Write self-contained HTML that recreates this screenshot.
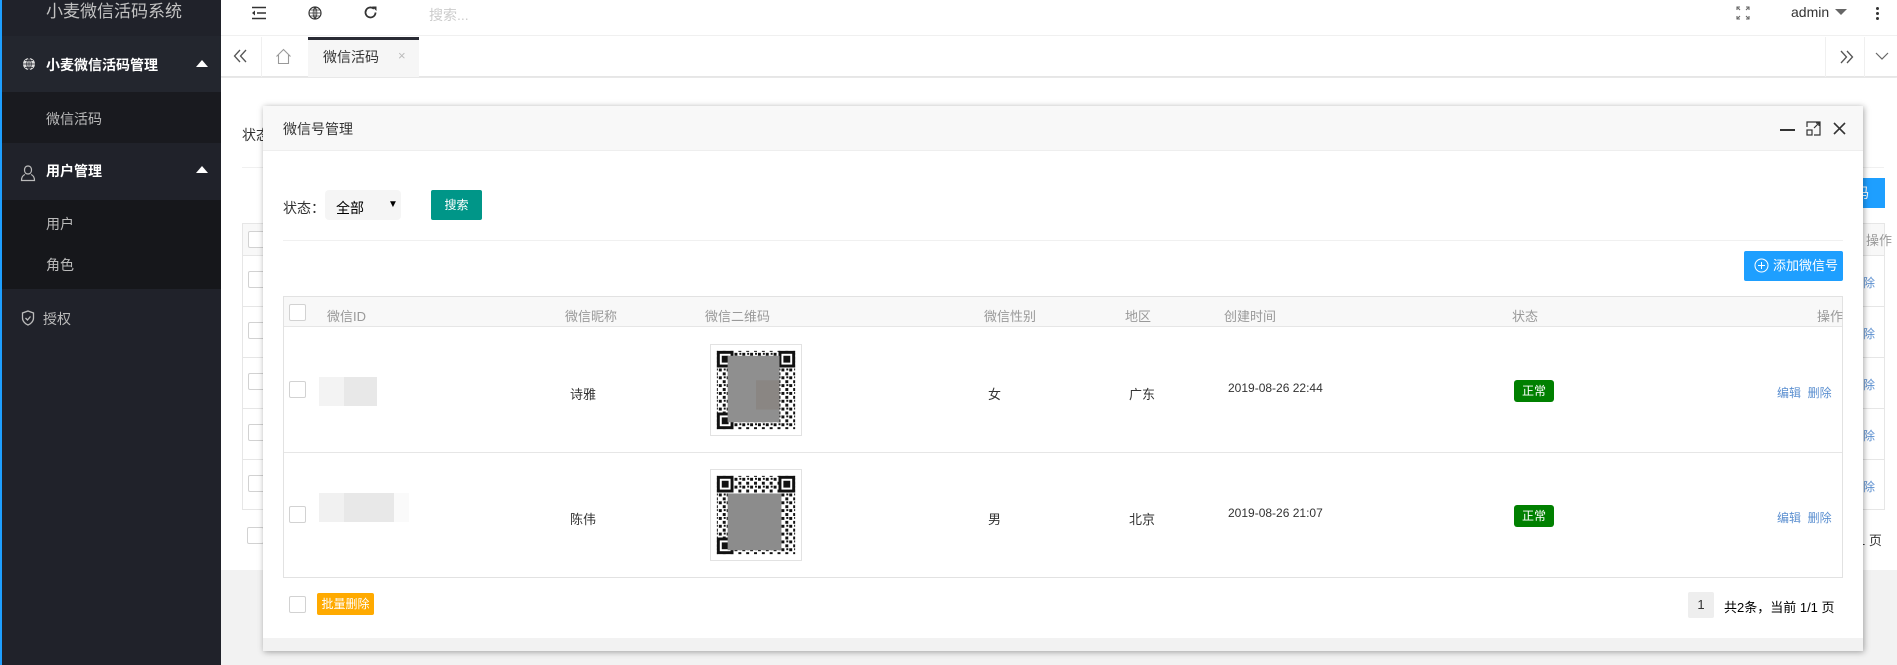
<!DOCTYPE html>
<html><head><meta charset="utf-8">
<style>
*{margin:0;padding:0;box-sizing:border-box}
body{width:1897px;height:665px;overflow:hidden;position:relative;background:#f2f2f2;font-family:"Liberation Sans","Noto Sans CJK SC",sans-serif;font-size:14px;color:#333}
.a{position:absolute}
.side{left:0;top:0;width:221px;height:665px;background:#20222a;border-left:2px solid #1e9fff}
.cb{position:absolute;width:17px;height:17px;border:1px solid #d2d2d2;background:#fff;border-radius:2px}
.th{position:absolute;top:306px;font-size:13px;color:#999}
.td{position:absolute;font-size:13px;color:#333}
.qr{position:absolute;width:92px;height:92px;border:1px solid #e2e2e2;background:#fff}
.tag{position:absolute;width:40px;height:22px;background:#008000;color:#fff;font-size:12px;border-radius:3px;text-align:center;line-height:22px}
.op{position:absolute;font-size:12px;color:#5b8fd0}
</style></head><body>
<div class="a side">
  <div class="a" style="left:0;top:0;width:219px;height:36px;color:#c2c2c2;font-size:17px;padding-left:44px;line-height:24px">小麦微信活码系统</div>
  <div class="a" style="left:0;top:36px;width:219px;height:56px;background:#23262e"></div>
  <svg class="a" style="left:20px;top:57px" width="14" height="14" viewBox="0 0 14 14"><circle cx="7" cy="7" r="6" fill="#ddd"/><path d="M1 7h12M7 1v12M3 3.5h8M3 10.5h8M7 1c-3 3-3 9 0 12M7 1c3 3 3 9 0 12" stroke="#20222a" stroke-width="0.8" fill="none"/></svg>
  <div class="a" style="left:44px;top:55px;color:#fff;font-size:14px;font-weight:bold">小麦微信活码管理</div>
  <div class="a" style="left:194px;top:60px;width:0;height:0;border-left:6px solid transparent;border-right:6px solid transparent;border-bottom:7px solid #fff"></div>
  <div class="a" style="left:0;top:92px;width:219px;height:51px;background:#191a1f"></div>
  <div class="a" style="left:44px;top:109px;color:#bbb;font-size:14px">微信活码</div>
  <svg class="a" style="left:18px;top:165px" width="16" height="17" viewBox="0 0 16 17"><path d="M8 1c2.5 0 3.5 2 3.5 4s-1 4-3.5 4-3.5-2-3.5-4 1-4 3.5-4zM5 9.5c-2.5 1-3.5 3-3.5 6h13c0-3-1-5-3.5-6" stroke="#bbb" stroke-width="1.2" fill="none"/></svg>
  <div class="a" style="left:44px;top:161px;color:#fff;font-size:14px;font-weight:bold">用户管理</div>
  <div class="a" style="left:194px;top:166px;width:0;height:0;border-left:6px solid transparent;border-right:6px solid transparent;border-bottom:7px solid #fff"></div>
  <div class="a" style="left:0;top:200px;width:219px;height:89px;background:#16171b"></div>
  <div class="a" style="left:44px;top:214px;color:#bbb">用户</div>
  <div class="a" style="left:44px;top:255px;color:#bbb">角色</div>
  <svg class="a" style="left:19px;top:310px" width="14" height="16" viewBox="0 0 14 16"><path d="M7 1l5.5 2v5c0 3.5-3 6-5.5 7-2.5-1-5.5-3.5-5.5-7V3z" stroke="#bbb" stroke-width="1.3" fill="none"/><path d="M4.5 8l2 2 3-3.5" stroke="#bbb" stroke-width="1.3" fill="none"/></svg>
  <div class="a" style="left:41px;top:309px;color:#bbb">授权</div>
</div>
<div class="a" style="left:221px;top:0;width:1676px;height:36px;background:#fff;border-bottom:1px solid #f0f0f0"></div>
<svg class="a" style="left:251px;top:6px" width="16" height="14" viewBox="0 0 16 14"><path d="M1 1.5h14M6 7h9M1 12.5h14" stroke="#333" stroke-width="1.6"/><path d="M4 4.5L1 7l3 2.5z" fill="#333"/></svg>
<svg class="a" style="left:308px;top:6px" width="14" height="14" viewBox="0 0 14 14"><circle cx="7" cy="7" r="6" fill="none" stroke="#333" stroke-width="1.2"/><path d="M1 7h12M7 1v12M2.5 4h9M2.5 10h9M7 1c-2.5 3-2.5 9 0 12M7 1c2.5 3 2.5 9 0 12" stroke="#333" stroke-width="0.8" fill="none"/></svg>
<svg class="a" style="left:363px;top:5px" width="15" height="15" viewBox="0 0 15 15"><path d="M12.5 7.5a5 5 0 1 1-1.6-3.7" stroke="#333" stroke-width="1.8" fill="none"/><path d="M9 1.5h4.5v4.5z" fill="#333"/></svg>
<div class="a" style="left:429px;top:5px;color:#ccc;font-size:14px">搜索...</div>
<svg class="a" style="left:1736px;top:6px" width="14" height="14" viewBox="0 0 14 14" stroke="#666" stroke-width="1.1" fill="none"><path d="M1 4V1h3M1 1l3 3M13 4V1h-3M13 1l-3 3M1 10v3h3M1 13l3-3M13 10v3h-3M13 13l-3-3"/></svg>
<div class="a" style="left:1791px;top:4px;color:#333;font-size:14px">admin</div>
<div class="a" style="left:1835px;top:9px;width:0;height:0;border-left:6px solid transparent;border-right:6px solid transparent;border-top:6px solid #666"></div>
<div class="a" style="left:1876px;top:7px;width:3px;height:3px;background:#333;border-radius:2px;box-shadow:0 5px 0 #333,0 10px 0 #333"></div>
<div class="a" style="left:221px;top:36px;width:1676px;height:41px;background:#fff;border-bottom:1px solid #e6e6e6;box-shadow:0 1px 2px rgba(0,0,0,.06)"></div>
<div class="a" style="left:261px;top:37px;width:1px;height:40px;background:#f0f0f0"></div>
<svg class="a" style="left:233px;top:49px" width="16" height="14" viewBox="0 0 16 14"><path d="M7 1L1.5 7 7 13M13 1L7.5 7 13 13" stroke="#555" stroke-width="1.3" fill="none"/></svg>
<svg class="a" style="left:275px;top:48px" width="17" height="17" viewBox="0 0 17 17"><path d="M1.5 8.5L8.5 1.5l7 7M3.5 7v8.5h10V7" stroke="#999" stroke-width="1.1" fill="none"/></svg>
<div class="a" style="left:308px;top:37px;width:111px;height:40px;background:#f6f6f6;border-top:3px solid #292b34"></div>
<div class="a" style="left:323px;top:47px;font-size:14px;color:#333">微信活码</div>
<div class="a" style="left:398px;top:48px;font-size:13px;color:#bbb">×</div>
<div class="a" style="left:1825px;top:37px;width:1px;height:40px;background:#f0f0f0"></div>
<div class="a" style="left:1864px;top:37px;width:1px;height:40px;background:#f0f0f0"></div>
<svg class="a" style="left:1838px;top:50px" width="16" height="14" viewBox="0 0 16 14"><path d="M3 1l5.5 6L3 13M9 1l5.5 6L9 13" stroke="#555" stroke-width="1.3" fill="none"/></svg>
<svg class="a" style="left:1875px;top:52px" width="14" height="9" viewBox="0 0 14 9"><path d="M1 1l6 6 6-6" stroke="#666" stroke-width="1.2" fill="none"/></svg>
<div class="a" style="left:221px;top:78px;width:1676px;height:492px;background:#fff"></div>
<div class="a" style="left:242px;top:125px;font-size:14px;color:#333">状态</div>
<div class="a" style="left:242px;top:167px;width:1642px;height:1px;background:#f0f0f0"></div>
<div class="a" style="left:1855px;top:178px;width:30px;height:30px;background:#1e9fff;color:#fff;font-size:14px;line-height:30px">码</div>
<div class="a" style="left:242px;top:223px;width:1643px;height:287px;border:1px solid #e6e6e6"></div>
<div class="a" style="left:243px;top:224px;width:1641px;height:31px;background:#f8f8f8"></div>
<div class="a" style="left:242px;top:255px;width:1642px;height:1px;background:#e6e6e6"></div>
<div class="a" style="left:242px;top:306px;width:1642px;height:1px;background:#e6e6e6"></div>
<div class="a" style="left:242px;top:357px;width:1642px;height:1px;background:#e6e6e6"></div>
<div class="a" style="left:242px;top:408px;width:1642px;height:1px;background:#e6e6e6"></div>
<div class="a" style="left:242px;top:459px;width:1642px;height:1px;background:#e6e6e6"></div>
<div class="cb" style="left:248px;top:231px"></div>
<div class="cb" style="left:248px;top:271px"></div>
<div class="cb" style="left:248px;top:322px"></div>
<div class="cb" style="left:248px;top:373px"></div>
<div class="cb" style="left:248px;top:424px"></div>
<div class="cb" style="left:248px;top:475px"></div>
<div class="cb" style="left:247px;top:527px"></div>
<div class="a" style="left:1866px;top:230px;font-size:13px;color:#999">操作</div>
<div class="op" style="left:1863px;top:274px">除</div>
<div class="op" style="left:1863px;top:325px">除</div>
<div class="op" style="left:1863px;top:376px">除</div>
<div class="op" style="left:1863px;top:427px">除</div>
<div class="op" style="left:1863px;top:478px">除</div>
<div class="a" style="left:1858px;top:530px;font-size:13px">1 页</div>
<div class="a" style="left:263px;top:106px;width:1600px;height:545px;background:#fff;box-shadow:1px 1px 6px rgba(0,0,0,.35)"></div>
<div class="a" style="left:263px;top:106px;width:1600px;height:45px;background:#f8f8f8;border-bottom:1px solid #eee"></div>
<div class="a" style="left:283px;top:119px;font-size:14px;color:#333">微信号管理</div>
<div class="a" style="left:1780px;top:129px;width:15px;height:2px;background:#333"></div>
<svg class="a" style="left:1806px;top:121px" width="15" height="15" viewBox="0 0 15 15" fill="none" stroke="#333" stroke-width="1.2"><path d="M1 6V1h13v13H8"/><rect x="1" y="9" width="5" height="5"/><path d="M8 7l5-5M10 2h3v3"/></svg>
<svg class="a" style="left:1833px;top:122px" width="13" height="13" viewBox="0 0 13 13"><path d="M1 1l11 11M12 1L1 12" stroke="#333" stroke-width="1.6"/></svg>
<div class="a" style="left:263px;top:638px;width:1600px;height:13px;background:#f2f2f2"></div>
<div class="a" style="left:283px;top:198px;font-size:14px">状态：</div>
<div class="a" style="left:325px;top:190px;width:76px;height:30px;background:#f5f5f5;border-radius:4px"></div>
<div class="a" style="left:336px;top:198px;font-size:14px;color:#000">全部</div>
<div class="a" style="left:388px;top:199px;font-size:10px;color:#000">▼</div>
<div class="a" style="left:431px;top:190px;width:51px;height:30px;background:#009688;border-radius:2px;color:#fff;font-size:12px;text-align:center;line-height:30px">搜索</div>
<div class="a" style="left:283px;top:240px;width:1560px;height:1px;background:#f0f0f0"></div>
<div class="a" style="left:1744px;top:251px;width:99px;height:30px;background:#1e9fff;border-radius:2px;color:#fff;font-size:13px;line-height:30px;padding-left:29px">添加微信号</div>
<svg class="a" style="left:1754px;top:258px" width="15" height="15" viewBox="0 0 15 15"><circle cx="7.5" cy="7.5" r="6.5" fill="none" stroke="#fff" stroke-width="1"/><path d="M7.5 4v7M4 7.5h7" stroke="#fff" stroke-width="1"/></svg>
<div class="a" style="left:283px;top:296px;width:1560px;height:282px;border:1px solid #e2e2e2"></div>
<div class="a" style="left:284px;top:297px;width:1558px;height:30px;background:#f8f8f8;border-bottom:1px solid #e6e6e6"></div>
<div class="a" style="left:284px;top:452px;width:1558px;height:1px;background:#e6e6e6"></div>
<div class="cb" style="left:289px;top:304px"></div>
<div class="th" style="left:327px">微信ID</div>
<div class="th" style="left:565px">微信昵称</div>
<div class="th" style="left:705px">微信二维码</div>
<div class="th" style="left:984px">微信性别</div>
<div class="th" style="left:1125px">地区</div>
<div class="th" style="left:1224px">创建时间</div>
<div class="th" style="left:1512px">状态</div>
<div class="th" style="left:1817px">操作</div>
<div class="cb" style="left:289px;top:381px"></div>
<div class="a" style="left:319px;top:377px;width:25px;height:29px;background:#f3f3f3"></div>
<div class="a" style="left:344px;top:377px;width:33px;height:29px;background:#e8e8e8"></div>
<div class="td" style="left:570px;top:384px">诗雅</div>
<div class="td" style="left:988px;top:384px">女</div>
<div class="td" style="left:1129px;top:384px">广东</div>
<div class="td" style="left:1228px;top:381px;font-size:12px">2019-08-26 22:44</div>
<div class="tag" style="left:1514px;top:380px">正常</div>
<div class="op" style="left:1777px;top:384px">编辑&nbsp; 删除</div>
<div class="cb" style="left:289px;top:506px"></div>
<div class="a" style="left:319px;top:493px;width:25px;height:29px;background:#f1f1f1"></div>
<div class="a" style="left:344px;top:493px;width:50px;height:29px;background:#e8e8e8"></div>
<div class="a" style="left:394px;top:493px;width:15px;height:29px;background:#fafafa"></div>
<div class="td" style="left:570px;top:509px">陈伟</div>
<div class="td" style="left:988px;top:509px">男</div>
<div class="td" style="left:1129px;top:509px">北京</div>
<div class="td" style="left:1228px;top:506px;font-size:12px">2019-08-26 21:07</div>
<div class="tag" style="left:1514px;top:505px">正常</div>
<div class="op" style="left:1777px;top:509px">编辑&nbsp; 删除</div>
<svg width="0" height="0" style="position:absolute"><defs>
<pattern id="dots" width="8" height="8" patternUnits="userSpaceOnUse"><rect width="3" height="3" fill="#111"/><rect x="4" y="4" width="3" height="3" fill="#111"/><rect x="5" y="0" width="2" height="2" fill="#111"/></pattern>
<g id="qrc"><rect x="6" y="6" width="80" height="80" fill="url(#dots)"/>
<rect x="6" y="6" width="17" height="17" fill="#fff"/><rect x="7.5" y="7.5" width="14" height="14" fill="none" stroke="#111" stroke-width="3"/><rect x="11" y="11" width="7" height="7" fill="#111"/>
<rect x="69" y="6" width="17" height="17" fill="#fff"/><rect x="70.5" y="7.5" width="14" height="14" fill="none" stroke="#111" stroke-width="3"/><rect x="74" y="11" width="7" height="7" fill="#111"/>
<rect x="6" y="69" width="17" height="17" fill="#fff"/><rect x="7.5" y="70.5" width="14" height="14" fill="none" stroke="#111" stroke-width="3"/><rect x="11" y="74" width="7" height="7" fill="#111"/></g>
</defs></svg>
<div class="qr" style="left:710px;top:344px"><svg width="90" height="90" viewBox="0 0 92 92"><use href="#qrc"/><rect x="17" y="11" width="53" height="68" fill="#8f8f8f"/><rect x="46" y="36" width="24" height="30" fill="#8a8683"/></svg></div>
<div class="qr" style="left:710px;top:469px"><svg width="90" height="90" viewBox="0 0 92 92"><use href="#qrc"/><rect x="17" y="24" width="55" height="58" fill="#8c8c8c"/></svg></div>
<div class="cb" style="left:289px;top:596px"></div>
<div class="a" style="left:317px;top:593px;width:57px;height:22px;background:#ffaa00;border-radius:2px;color:#fff;font-size:12px;text-align:center;line-height:22px">批量删除</div>
<div class="a" style="left:1688px;top:592px;width:26px;height:26px;background:#eee;border-radius:2px;text-align:center;line-height:26px;font-size:13px">1</div>
<div class="a" style="left:1724px;top:597px;font-size:13px;color:#000">共2条，当前 1/1 页</div>
</body></html>
